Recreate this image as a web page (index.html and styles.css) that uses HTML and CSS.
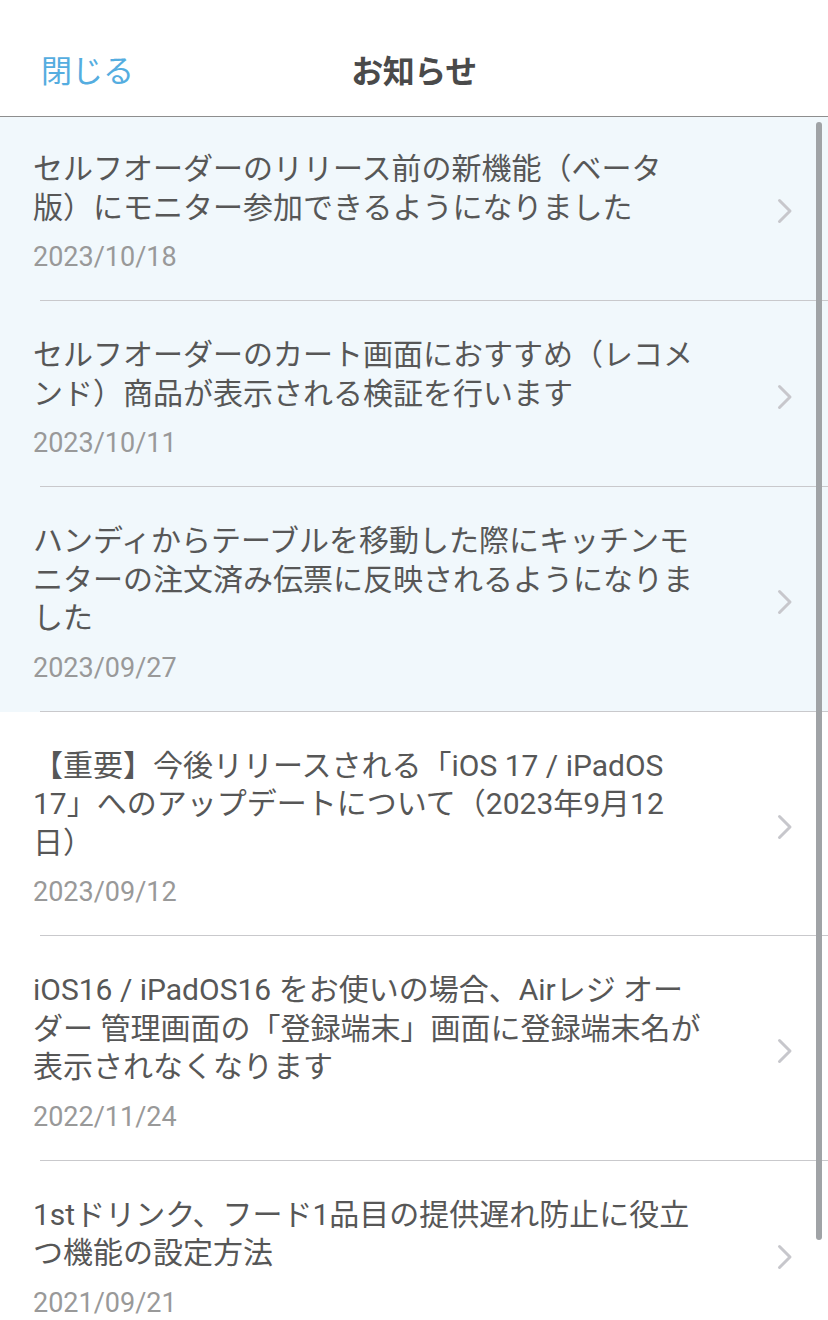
FILE: index.html
```html
<!DOCTYPE html>
<html lang="ja">
<head>
<meta charset="utf-8">
<title>お知らせ</title>
<link rel="stylesheet" href="styles.css">
</head>
<body>
<header class="nav">
  <div class="nav-left"><span class="close">閉じる</span></div>
  <h1 class="nav-title">お知らせ</h1>
  <div class="nav-right"></div>
</header>
<ul class="list">
  <li class="item unread first">
    <div class="item-body">
      <p class="item-title">セルフオーダーのリリース前の新機能（ベータ<br>版）にモニター参加できるようになりました</p>
      <p class="item-date">2023/10/18</p>
    </div>
    <svg class="chev" width="16" height="26" viewBox="0 0 16 26"><polyline points="2.5,2.5 13,13 2.5,23.5" fill="none" stroke="#c7c7cc" stroke-width="3" stroke-linecap="round" stroke-linejoin="round"/></svg>
  </li>
  <li class="item unread">
    <div class="item-body">
      <p class="item-title">セルフオーダーのカート画面におすすめ（レコメ<br>ンド）商品が表示される検証を行います</p>
      <p class="item-date">2023/10/11</p>
    </div>
    <svg class="chev" width="16" height="26" viewBox="0 0 16 26"><polyline points="2.5,2.5 13,13 2.5,23.5" fill="none" stroke="#c7c7cc" stroke-width="3" stroke-linecap="round" stroke-linejoin="round"/></svg>
  </li>
  <li class="item unread">
    <div class="item-body">
      <p class="item-title">ハンディからテーブルを移動した際にキッチンモ<br>ニターの注文済み伝票に反映されるようになりま<br>した</p>
      <p class="item-date">2023/09/27</p>
    </div>
    <svg class="chev" width="16" height="26" viewBox="0 0 16 26"><polyline points="2.5,2.5 13,13 2.5,23.5" fill="none" stroke="#c7c7cc" stroke-width="3" stroke-linecap="round" stroke-linejoin="round"/></svg>
  </li>
  <li class="item">
    <div class="item-body">
      <p class="item-title">【重要】今後リリースされる「iOS 17 / iPadOS<br>17」へのアップデートについて（2023年9月12<br>日）</p>
      <p class="item-date">2023/09/12</p>
    </div>
    <svg class="chev" width="16" height="26" viewBox="0 0 16 26"><polyline points="2.5,2.5 13,13 2.5,23.5" fill="none" stroke="#c7c7cc" stroke-width="3" stroke-linecap="round" stroke-linejoin="round"/></svg>
  </li>
  <li class="item">
    <div class="item-body">
      <p class="item-title">iOS16 / iPadOS16 をお使いの場合、Airレジ オー<br>ダー 管理画面の「登録端末」画面に登録端末名が<br>表示されなくなります</p>
      <p class="item-date">2022/11/24</p>
    </div>
    <svg class="chev" width="16" height="26" viewBox="0 0 16 26"><polyline points="2.5,2.5 13,13 2.5,23.5" fill="none" stroke="#c7c7cc" stroke-width="3" stroke-linecap="round" stroke-linejoin="round"/></svg>
  </li>
  <li class="item">
    <div class="item-body">
      <p class="item-title">1stドリンク、フード1品目の提供遅れ防止に役立<br>つ機能の設定方法</p>
      <p class="item-date">2021/09/21</p>
    </div>
    <svg class="chev" width="16" height="26" viewBox="0 0 16 26"><polyline points="2.5,2.5 13,13 2.5,23.5" fill="none" stroke="#c7c7cc" stroke-width="3" stroke-linecap="round" stroke-linejoin="round"/></svg>
  </li>
</ul>
<div class="scrollbar"></div>
</body>
</html>
```

FILE: styles.css
```css
html, body {
  margin: 0;
  padding: 0;
}
body {
  width: 828px;
  height: 1320px;
  overflow: hidden;
  background: #ffffff;
  font-family: Roboto, "Noto Sans CJK JP", sans-serif;
  color: #555555;
  position: relative;
}
.nav {
  display: grid;
  grid-template-columns: 1fr auto 1fr;
  align-items: center;
  height: 88px;
  padding-top: 28px;
  border-bottom: 1px solid #8e8e8e;
  box-sizing: content-box;
}
.nav-left {
  padding-left: 41px;
}
.close {
  font-size: 31px;
  color: #55ade0;
  line-height: 40px;
}
.nav-title {
  margin: 0;
  font-size: 32px;
  font-weight: 700;
  color: #4a4a4a;
  line-height: 40px;
  letter-spacing: -0.5px;
}
.list {
  list-style: none;
  margin: 0;
  padding: 0;
}
.item {
  display: flex;
  align-items: center;
  padding: 35px 35px 29px 33px;
  background-image: linear-gradient(#c9c9cc, #c9c9cc);
  background-repeat: no-repeat;
  background-position: 40px 100%;
  background-size: calc(100% - 40px) 1px;
}
.item.first {
  padding-top: 33px;
}
.item.unread {
  background-color: #f1f8fc;
}
.item-body {
  flex: 1;
  min-width: 0;
}
.item-title {
  margin: 0;
  font-size: 30px;
  line-height: 38.5px;
  color: #575757;
  white-space: nowrap;
}
.item-date {
  margin: 15px 0 0;
  font-size: 27px;
  line-height: 30px;
  color: #999999;
}
.chev {
  flex: none;
  display: block;
}
.scrollbar {
  position: absolute;
  top: 122px;
  left: 816px;
  width: 6px;
  height: 1118px;
  border-radius: 3px;
  background: #a0a3a6;
}
```
